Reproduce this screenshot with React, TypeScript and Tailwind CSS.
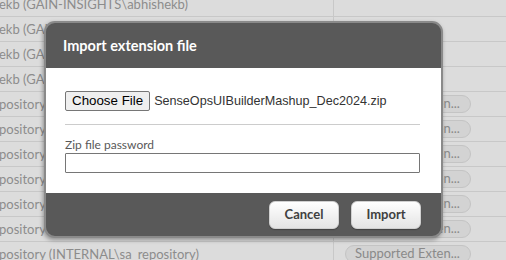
import React from "react";

const rows: { left: string; pill: boolean }[] = [
  { left: "ekb (GAIN-INSIGHTS\\abhishekb)", pill: false },
  { left: "ekb (GAIN-INSIGHTS\\abhishekb)", pill: false },
  { left: "ekb (GAIN-INSIGHTS\\abhishekb)", pill: false },
  { left: "ekb (GAIN-INSIGHTS\\abhishekb)", pill: false },
  { left: "pository (INTERNAL\\sa_repository)", pill: true },
  { left: "pository (INTERNAL\\sa_repository)", pill: true },
  { left: "pository (INTERNAL\\sa_repository)", pill: true },
  { left: "pository (INTERNAL\\sa_repository)", pill: true },
  { left: "pository (INTERNAL\\sa_repository)", pill: true },
  { left: "pository (INTERNAL\\sa_repository)", pill: true },
  { left: "pository (INTERNAL\\sa_repository)", pill: true },
];

export default function App() {
  return (
    <div className="relative w-[506px] h-[260px] overflow-hidden bg-[#dcdcdc] font-['Lato',sans-serif]">
      <div className="-mt-[8px] flex flex-col">
        {rows.map((r, i) => (
          <div key={i} className="flex h-[25px] border-b border-[#c8c8c8]">
            <div className="w-[335px] shrink-0 border-r border-[#c8c8c8] flex items-center pt-[1px] -ml-[1px] text-[13px] text-[#8c8c8c] whitespace-nowrap overflow-hidden">
              {r.left}
            </div>
            <div className="flex-1 flex items-center pl-[11px]">
              {r.pill && (
                <div className="w-[126px] h-[18px] rounded-full bg-[#d3d3d3] border border-[#c4c4c4] flex items-center pl-[9px] text-[13px] text-[#8a8a8a] whitespace-nowrap overflow-hidden">
                  Supported Exten...
                </div>
              )}
            </div>
          </div>
        ))}
      </div>

      <div className="absolute left-[44px] top-[21px] w-[399px] rounded-[11px] border-2 border-[#8a8a8a] bg-[#595959] overflow-hidden shadow-[-1px_2px_4px_rgba(0,0,0,0.35)]">
        <div className="h-[45px] flex items-center pl-[17px] pt-[1px] text-white font-bold text-[14.5px]">
          Import extension file
        </div>
        <div className="bg-white pt-[23px] pl-[19px] pr-[21px] pb-[20px] flex flex-col">
          <div className="flex items-center h-[20px] font-['Liberation_Sans',Arial,sans-serif] text-[13.33px] text-black">
            <div className="h-[20px] px-[6px] flex items-center bg-[#efefef] border border-[#767676] rounded-[2px]">
              Choose File
            </div>
            <span className="ml-[4px] text-[12.6px] text-[#333]">SenseOpsUIBuilderMashup_Dec2024.zip</span>
          </div>
          <div className="mt-[13px] h-px bg-[#cccccc]" />
          <div className="mt-[12px] h-[16px] flex items-center text-[12px] text-[#595959]">
            Zip file password
          </div>
          <div className="h-[20px] border border-[#767676] rounded-[1px] bg-white" />
        </div>
        <div className="h-[43px] flex justify-end items-start pt-[8px] pr-[20px] gap-[12px]">
          <button className="w-[70px] h-[28px] rounded-[6px] border border-[#d0d0d0] bg-gradient-to-b from-white to-[#e4e4e4] text-[13px] font-bold text-[#404040] shadow-[0_1px_1px_rgba(0,0,0,0.25)]">
            Cancel
          </button>
          <button className="w-[70px] h-[28px] rounded-[6px] border border-[#d0d0d0] bg-gradient-to-b from-white to-[#e4e4e4] text-[13px] font-bold text-[#404040] shadow-[0_1px_1px_rgba(0,0,0,0.25)]">
            Import
          </button>
        </div>
      </div>
    </div>
  );
}
